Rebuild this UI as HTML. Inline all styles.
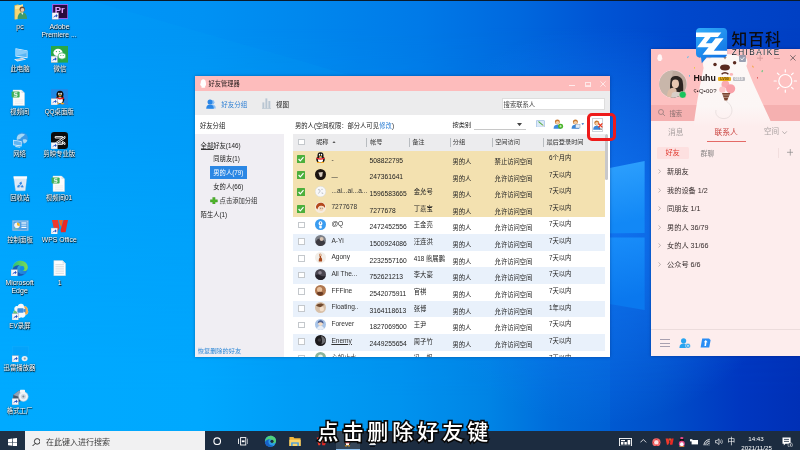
<!DOCTYPE html>
<html lang="zh-CN"><head><meta charset="utf-8"><title>desktop</title><style>
html,body{margin:0;padding:0}
body{width:800px;height:450px;overflow:hidden;position:relative;font-family:"Liberation Sans","Noto Sans CJK SC",sans-serif;background:#0b6fd0}
#wrap{position:absolute;left:-8px;top:-8px;width:816px;height:466px;overflow:hidden;filter:blur(0.35px);background:#0070e0}
#wrap>#in{position:absolute;left:8px;top:8px;width:800px;height:450px}
.a{position:absolute;display:block}
.t{position:absolute;white-space:nowrap;line-height:1.16}
.sh{text-shadow:0.5px 0.6px 0.7px rgba(0,0,0,.95),0 0 1.4px rgba(0,0,0,.75)}
.sub{-webkit-text-stroke:3.1px #080808;paint-order:stroke fill;stroke-linejoin:round;letter-spacing:0.19em;font-weight:500}
</style></head>
<body>
<div id="wrap"><div id="in">
<svg class="a" style="left:0;top:0;width:800px;height:450px" viewBox="0 0 800 450" preserveAspectRatio="none">
<defs>
<linearGradient id="bgT" x1="0" y1="0" x2="1" y2="0">
<stop offset="0" stop-color="#0099fa"/><stop offset="0.25" stop-color="#0092f4"/><stop offset="0.375" stop-color="#0088ee"/><stop offset="0.525" stop-color="#007ae8"/><stop offset="0.65" stop-color="#0068de"/><stop offset="0.75" stop-color="#0054d4"/><stop offset="0.84" stop-color="#0048cc"/><stop offset="1" stop-color="#0040c4"/>
</linearGradient>
<linearGradient id="bgB" x1="0" y1="0" x2="1" y2="0">
<stop offset="0" stop-color="#00a8ff"/><stop offset="0.25" stop-color="#00a6fe"/><stop offset="0.375" stop-color="#009af6"/><stop offset="0.5" stop-color="#0090ee"/><stop offset="0.61" stop-color="#0080e4"/><stop offset="0.7" stop-color="#0064d7"/><stop offset="0.76" stop-color="#005ad2"/><stop offset="0.825" stop-color="#0050ca"/><stop offset="0.925" stop-color="#0037c0"/><stop offset="1" stop-color="#0030b6"/>
</linearGradient>
<linearGradient id="vm" x1="0" y1="0" x2="0" y2="1"><stop offset="0" stop-color="#fff" stop-opacity="0"/><stop offset="0.06" stop-color="#fff" stop-opacity="0"/><stop offset="0.47" stop-color="#fff" stop-opacity="0.62"/><stop offset="0.88" stop-color="#fff" stop-opacity="1"/></linearGradient>
<mask id="vmask"><rect width="800" height="450" fill="url(#vm)"/></mask>
<linearGradient id="pane" x1="0" y1="0" x2="0.3" y2="1">
<stop offset="0" stop-color="#34a6ff"/><stop offset="1" stop-color="#1288f6"/>
</linearGradient>
<linearGradient id="pane2" x1="0" y1="0" x2="0.3" y2="1">
<stop offset="0" stop-color="#1c92fc"/><stop offset="1" stop-color="#0a78ee"/>
</linearGradient>
<radialGradient id="glow" cx="600" cy="225" r="200" gradientUnits="userSpaceOnUse"><stop offset="0" stop-color="#1880ff" stop-opacity=".7"/><stop offset="1" stop-color="#1c8cff" stop-opacity="0"/></radialGradient>
</defs>
<rect width="800" height="450" fill="url(#bgT)"/>
<rect width="800" height="450" fill="url(#bgB)" mask="url(#vmask)"/>
<polygon points="89,0 610,150 610,450 0,450 0,0" fill="#00c8ff" opacity="0.06"/>
<rect x="400" y="25" width="400" height="400" fill="url(#glow)"/>
<polygon points="540,182 644.6,161 644.6,233 540,234" fill="url(#pane)"/>
<polygon points="540,237.4 644.6,237.4 644.6,310 540,292" fill="url(#pane2)"/>
<rect width="800" height="1" fill="#0a1a2a"/>
</svg>
<svg class="a" style="left:12px;top:3px;width:18px;height:18px;" viewBox="0 0 18 18">
<path d="M2.5 2.2 L6.5 1.2 L6.5 15.5 L2.5 16.5Z" fill="#e9b84a"/>
<path d="M3.2 3 L11 1.6 L11 15.2 L3.2 16.4Z" fill="#f7d674"/>
<path d="M3.2 3 L11 1.6 L11 5 L3.2 6.2Z" fill="#fbe59a"/>
<circle cx="10.2" cy="6.2" r="2.6" fill="#6a4a32"/>
<circle cx="10.4" cy="6.9" r="1.9" fill="#f0c8a0"/>
<path d="M5.6 16 C5.6 11.5 7.6 9.6 10.3 9.6 C13 9.6 15 11.5 15 16Z" fill="#3f9a68"/>
<path d="M9.2 9.8 L10.3 12 L11.4 9.8Z" fill="#e8f0ea"/>
</svg>
<div class="t sh" style="top:23.04px;font-size:7px;color:#fff;left:-5.00px;width:50px;text-align:center;">pc</div>
<svg class="a" style="left:51.5px;top:4.2px;width:16.4px;height:15.6px;" viewBox="0 0 16.4 15.6">
<rect x="0.6" y="0.4" width="15.2" height="14.2" fill="#2a0b3e" stroke="#9a62f0" stroke-width="1.1"/>
<g transform="translate(0,8.8)"><rect width="6.5" height="6.5" fill="#f4f6fa" stroke="#8a98b0" stroke-width="0.4"/><path d="M1.5 5.2 C1.6 3.2 2.8 2.4 4 2.4 L4 1.2 L5.8 3 L4 4.6 L4 3.6 C3 3.6 2.2 4 1.5 5.2Z" fill="#2453c8"/></g></svg>
<div class="t" style="top:4.49px;font-size:9.5px;color:#e3a6ff;left:49.80px;width:20px;text-align:center;font-weight:bold;">Pr</div>
<div class="t sh" style="top:23.04px;font-size:7px;color:#fff;left:34.50px;width:50px;text-align:center;">Adobe</div>
<div class="t sh" style="top:31.16px;font-size:6.8px;color:#fff;left:34.00px;width:50px;text-align:center;">Premiere ...</div>
<svg class="a" style="left:12px;top:46px;width:18px;height:18px;" viewBox="0 0 18 18">
<path d="M3.5 2.2 L15.5 4.4 L15.5 12.2 L3.5 10.6Z" fill="#e8f4ff"/>
<path d="M4.3 3.2 L14.8 5.1 L14.8 11.3 L4.3 9.8Z" fill="#5ab6f4"/>
<path d="M4.3 3.2 L14.8 5.1 L14.8 7 L4.3 9.8Z" fill="#86ccfa"/>
<path d="M8.6 11.4 L10.6 11.7 L10.6 13 L8.6 12.7Z" fill="#c8d4e0"/>
<path d="M2 13.2 L10.5 12 L14.2 13.6 L5.4 15.4Z" fill="#eef3f8"/>
<path d="M3.4 13.4 L10.2 12.5 L12.4 13.5 L5.6 14.6Z" fill="#b8c4d2"/>
</svg>
<div class="t sh" style="top:65.29px;font-size:6.4px;color:#fff;left:-5.00px;width:50px;text-align:center;">此电脑</div>
<svg class="a" style="left:51px;top:46.4px;width:17px;height:16.6px;" viewBox="0 0 17 16.6">
<rect width="17" height="16.6" fill="#2aa745"/>
<ellipse cx="7" cy="6.6" rx="4.6" ry="3.8" fill="#fff"/>
<ellipse cx="11" cy="10" rx="3.9" ry="3.2" fill="#fff" stroke="#2aa745" stroke-width="0.7"/>
<circle cx="5.4" cy="5.6" r="0.6" fill="#2aa745"/><circle cx="8.4" cy="5.6" r="0.6" fill="#2aa745"/>
<circle cx="9.8" cy="9.4" r="0.5" fill="#2aa745"/><circle cx="12.2" cy="9.4" r="0.5" fill="#2aa745"/>
<g transform="translate(0,10.1)"><rect width="6.5" height="6.5" fill="#f4f6fa" stroke="#8a98b0" stroke-width="0.4"/><path d="M1.5 5.2 C1.6 3.2 2.8 2.4 4 2.4 L4 1.2 L5.8 3 L4 4.6 L4 3.6 C3 3.6 2.2 4 1.5 5.2Z" fill="#2453c8"/></g></svg>
<div class="t sh" style="top:65.29px;font-size:6.4px;color:#fff;left:35.00px;width:50px;text-align:center;">微信</div>
<svg class="a" style="left:10.2px;top:89px;width:17px;height:17px;" viewBox="0 0 17 17">
<path d="M3 1 L11.5 1 L14.5 4 L14.5 16.5 L3 16.5Z" fill="#fbfbfb" stroke="#d4d8dc" stroke-width="0.4"/>
<path d="M11.5 1 L11.5 4 L14.5 4Z" fill="#dfe4e8"/>
<rect x="1.6" y="2.4" width="8" height="6.2" rx="0.8" fill="#3fae56"/>
<path d="M7.4 3.8 L4.4 3.8 L4.4 5.4 L7 5.4 L7 7.2 L3.8 7.2" fill="none" stroke="#fff" stroke-width="0.9"/>
<path d="M5 11 L13 11 M5 12.8 L13 12.8 M5 14.6 L13 14.6" stroke="#e2e6ea" stroke-width="0.6"/>
</svg>
<div class="t sh" style="top:108.39px;font-size:6.4px;color:#fff;left:-5.40px;width:50px;text-align:center;">视频间</div>
<svg class="a" style="left:51px;top:89px;width:17px;height:16px;" viewBox="0 0 17 16">
<rect width="17" height="16" fill="#1f8ae6"/>
<ellipse cx="9" cy="5.6" rx="3.5" ry="3.8" fill="#111"/>
<ellipse cx="9" cy="10.6" rx="4.3" ry="4" fill="#111"/>
<ellipse cx="9" cy="11.2" rx="2.8" ry="3" fill="#fff"/>
<ellipse cx="7.9" cy="4.8" rx="0.8" ry="1.1" fill="#fff"/><ellipse cx="10.1" cy="4.8" rx="0.8" ry="1.1" fill="#fff"/>
<ellipse cx="9" cy="6.8" rx="1.7" ry="0.7" fill="#f7a81c"/>
<path d="M5.2 8 C7 9.4 11 9.4 12.8 8 L13 9.6 C11 10.8 7 10.8 5 9.6Z" fill="#e8262a"/>
<ellipse cx="6.6" cy="14.6" rx="1.9" ry="0.8" fill="#f7a81c"/><ellipse cx="11.4" cy="14.6" rx="1.9" ry="0.8" fill="#f7a81c"/>
<g transform="translate(0,9.5)"><rect width="6.5" height="6.5" fill="#f4f6fa" stroke="#8a98b0" stroke-width="0.4"/><path d="M1.5 5.2 C1.6 3.2 2.8 2.4 4 2.4 L4 1.2 L5.8 3 L4 4.6 L4 3.6 C3 3.6 2.2 4 1.5 5.2Z" fill="#2453c8"/></g></svg>
<div class="t sh" style="top:108.39px;font-size:6.4px;color:#fff;left:34.20px;width:50px;text-align:center;">QQ桌面版</div>
<svg class="a" style="left:12px;top:131.5px;width:18px;height:17px;" viewBox="0 0 18 17">
<circle cx="10.2" cy="6.2" r="5.6" fill="#3a9ae8"/>
<path d="M6 3.2 C8 1.6 11 1.2 13 2.4 C12 4 9.6 4.6 8.6 6.4 C7.8 7.6 6.2 6.8 5 8 C4.4 6.2 5 4.4 6 3.2Z" fill="#a4d8f6"/>
<path d="M11 7.6 C12.6 7 14.6 7.6 15.4 8.6 C14.8 10.2 13.6 11.2 12 11.6 C11.2 10.4 10.6 9 11 7.6Z" fill="#a4d8f6"/>
<path d="M1.2 7.8 L9.6 9.2 L9.6 14.4 L1.2 13.2Z" fill="#eaf4fd"/>
<path d="M1.9 8.6 L8.9 9.8 L8.9 13.6 L1.9 12.5Z" fill="#5fb4f2"/>
<path d="M3.4 14 L8.2 14.7 L8.2 15.7 L3.4 15Z" fill="#d8e2ec"/>
</svg>
<div class="t sh" style="top:150.49px;font-size:6.4px;color:#fff;left:-5.40px;width:50px;text-align:center;">网络</div>
<svg class="a" style="left:51px;top:131.5px;width:17px;height:17px;" viewBox="0 0 17 17">
<rect width="17" height="17" rx="3.2" fill="#0b0b0b"/>
<path d="M4.2 4.6 L11.6 4.6 L11.6 6 L14 4.4 L14 6.2 L6.6 11 L11.6 11 L11.6 12.4 L4.2 12.4 L4.2 11 L4.2 11 L11.4 6 L4.2 6Z M11.6 11 L14 12.6 L14 10.8 L11.6 9.4Z" fill="none" stroke="#fff" stroke-width="0.9" stroke-linejoin="round"/>
<g transform="translate(0,10.5)"><rect width="6.5" height="6.5" fill="#f4f6fa" stroke="#8a98b0" stroke-width="0.4"/><path d="M1.5 5.2 C1.6 3.2 2.8 2.4 4 2.4 L4 1.2 L5.8 3 L4 4.6 L4 3.6 C3 3.6 2.2 4 1.5 5.2Z" fill="#2453c8"/></g></svg>
<div class="t sh" style="top:150.49px;font-size:6.4px;color:#fff;left:34.30px;width:50px;text-align:center;">剪映专业版</div>
<svg class="a" style="left:12px;top:174.5px;width:17px;height:17px;" viewBox="0 0 17 17">
<path d="M1.6 1.6 L15 1.6 L13.2 15.8 L3.6 15.8Z" fill="#eef4fb" stroke="#9fc4e6" stroke-width="0.4"/>
<path d="M1.6 1.6 L15 1.6 L14.7 3.8 L1.9 3.8Z" fill="#fbfdff"/>
<path d="M2.8 3.8 L13.8 3.8 L12.6 15 L4.2 15Z" fill="#dce9f6"/>
<path d="M8.3 6.2 L10 8.8 L8.9 8.8 L8.9 9.8 L7.7 9.8 L7.7 8.8 L6.6 8.8Z" fill="#2f86e4" transform="rotate(20 8.3 9.5)"/>
<path d="M6.2 9.6 L5 12.2 L7.6 12.4 L7.2 11.6 L8.4 11 L7.8 10 L6.7 10.5Z" fill="#2f86e4"/>
<path d="M10.4 9.8 L11.8 12.2 L9.2 12.6 L9.4 11.8 L8.4 11.4 L9 10.4 L10 10.8Z" fill="#2f86e4"/>
</svg>
<div class="t sh" style="top:193.69px;font-size:6.4px;color:#fff;left:-5.20px;width:50px;text-align:center;">回收站</div>
<svg class="a" style="left:49.8px;top:174.5px;width:17px;height:17px;" viewBox="0 0 17 17">
<path d="M3 1 L11.5 1 L14.5 4 L14.5 16.5 L3 16.5Z" fill="#fbfbfb" stroke="#d4d8dc" stroke-width="0.4"/>
<path d="M11.5 1 L11.5 4 L14.5 4Z" fill="#dfe4e8"/>
<rect x="1.6" y="2.4" width="8" height="6.2" rx="0.8" fill="#3fae56"/>
<path d="M7.4 3.8 L4.4 3.8 L4.4 5.4 L7 5.4 L7 7.2 L3.8 7.2" fill="none" stroke="#fff" stroke-width="0.9"/>
<path d="M5 11 L13 11 M5 12.8 L13 12.8 M5 14.6 L13 14.6" stroke="#e2e6ea" stroke-width="0.6"/>
</svg>
<div class="t sh" style="top:193.69px;font-size:6.4px;color:#fff;left:34.00px;width:50px;text-align:center;">视频间01</div>
<svg class="a" style="left:11.5px;top:219.5px;width:17px;height:12px;" viewBox="0 0 17 12">
<rect x="0.5" y="0.6" width="15.8" height="10" fill="#dcecf8" stroke="#6aa2d8" stroke-width="0.5"/>
<rect x="1.2" y="1.3" width="14.4" height="8.6" fill="#4f9fe4"/>
<circle cx="5" cy="5.2" r="2.8" fill="#f4f4f0"/><path d="M5 5.2 L5 2.4 A2.8 2.8 0 0 1 7.6 6.2Z" fill="#f0b428"/>
<rect x="9.4" y="2.4" width="5" height="1.2" fill="#fff"/><rect x="9.4" y="4.6" width="5" height="1.2" fill="#cfe6fa"/><rect x="9.4" y="6.8" width="5" height="1.2" fill="#fff"/>
<rect x="2.2" y="8.6" width="3.4" height="0.8" fill="#9fe07a"/>
</svg>
<div class="t sh" style="top:236.09px;font-size:6.4px;color:#fff;left:-5.00px;width:50px;text-align:center;">控制面板</div>
<svg class="a" style="left:51px;top:218.5px;width:17.5px;height:15.5px;" viewBox="0 0 17.5 15.5">
<path d="M1 1 L7 1 L8.4 9 L6.2 13.2 L3.6 13.2Z" fill="#f0392b"/>
<path d="M7.6 1 L12 1 L10.4 8.6 L8.8 5.2Z" fill="#f7671f"/>
<path d="M12.6 1 L17 1 L14.6 13.2 L10 13.2 L9.6 11Z" fill="#ea2a24"/>
<g transform="translate(0,9)"><rect width="6.5" height="6.5" fill="#f4f6fa" stroke="#8a98b0" stroke-width="0.4"/><path d="M1.5 5.2 C1.6 3.2 2.8 2.4 4 2.4 L4 1.2 L5.8 3 L4 4.6 L4 3.6 C3 3.6 2.2 4 1.5 5.2Z" fill="#2453c8"/></g></svg>
<div class="t sh" style="top:235.86px;font-size:6.8px;color:#fff;left:34.30px;width:50px;text-align:center;">WPS Office</div>
<svg class="a" style="left:11px;top:259.5px;width:17.6px;height:16.6px;" viewBox="0 0 17.6 16.6">
<defs><linearGradient id="eg1" x1="0" y1="0" x2="1" y2="1"><stop offset="0" stop-color="#37c2e8"/><stop offset="1" stop-color="#1a6fd6"/></linearGradient>
<linearGradient id="eg2" x1="0" y1="0" x2="1" y2="0"><stop offset="0" stop-color="#2fbf7a"/><stop offset="1" stop-color="#7fdc52"/></linearGradient></defs>
<circle cx="9" cy="8.2" r="7.8" fill="url(#eg1)"/>
<path d="M2 6 C3.6 1.8 8 -0.4 12.4 1.2 C15.4 2.4 17 5 16.8 8 C16.6 10.4 14.6 11.4 12.6 11 C11 10.6 10.4 9.4 11 8.2 C11.4 7.2 10.6 5.6 8.6 5.4 C6 5.2 3.4 6.4 2 9.6Z" fill="url(#eg2)"/>
<path d="M1.4 9.4 C2.6 6.4 5.6 5 8.4 5.4 C6.6 6.2 5.8 8 6.4 10.2 C7.2 13 9.8 14.6 13.2 14 C11 16.2 7.4 16.6 4.6 15 C2.4 13.8 1.2 11.6 1.4 9.4Z" fill="#1759b8"/>
<ellipse cx="11.2" cy="8.4" rx="2.2" ry="2.4" fill="#0c8ee6"/>
<g transform="translate(0,9.6)"><rect width="6.5" height="6.5" fill="#f4f6fa" stroke="#8a98b0" stroke-width="0.4"/><path d="M1.5 5.2 C1.6 3.2 2.8 2.4 4 2.4 L4 1.2 L5.8 3 L4 4.6 L4 3.6 C3 3.6 2.2 4 1.5 5.2Z" fill="#2453c8"/></g></svg>
<div class="t sh" style="top:278.74px;font-size:7px;color:#fff;left:-5.40px;width:50px;text-align:center;">Microsoft</div>
<div class="t sh" style="top:286.94px;font-size:7px;color:#fff;left:-5.40px;width:50px;text-align:center;">Edge</div>
<svg class="a" style="left:53px;top:260px;width:13.4px;height:16.4px;" viewBox="0 0 13.4 16.4">
<path d="M0.8 0.6 L9.6 0.6 L12.6 3.6 L12.6 15.8 L0.8 15.8Z" fill="#fdfdfd" stroke="#c8ccd0" stroke-width="0.4"/>
<path d="M9.6 0.6 L9.6 3.6 L12.6 3.6Z" fill="#dde1e5"/>
<path d="M2.4 4.6 L11 4.6 M2.4 6.4 L11 6.4 M2.4 8.2 L11 8.2 M2.4 10 L11 10 M2.4 11.8 L11 11.8 M2.4 13.6 L11 13.6" stroke="#d0d4d8" stroke-width="0.7"/>
</svg>
<div class="t sh" style="top:278.54px;font-size:7px;color:#fff;left:34.60px;width:50px;text-align:center;">1</div>
<svg class="a" style="left:11.5px;top:302.5px;width:17px;height:17.5px;" viewBox="0 0 17 17.5">
<path d="M8.6 0.8 C10.6 0.4 12 1.8 12 3.4 C14 3 16 4.6 15.6 7 C17 8.6 16 11.6 13.6 11.8 C13.4 14 11 15.4 9 14.2 C7 16 3.8 15 3.6 12.4 C1.2 11.8 0.6 8.6 2.6 7.2 C1.6 4.8 3.6 2.6 5.8 3.2 C6 1.8 7.2 0.9 8.6 0.8Z" fill="#f4f8fb"/>
<path d="M12 3.4 C14 3 16 4.6 15.6 7 C17 8.6 16 11.6 13.6 11.8 L12.6 9 L13 6Z" fill="#f2a23a" opacity="0.9"/>
<path d="M3.6 12.4 C1.2 11.8 0.6 8.6 2.6 7.2 L5 9 L5.4 12Z" fill="#5bbf6a" opacity="0.9"/>
<rect x="5.4" y="5.2" width="6.2" height="4.6" rx="0.8" fill="#3a8ee0"/><path d="M11.6 6.6 L13.6 5.4 L13.6 9.6 L11.6 8.4Z" fill="#3a8ee0"/>
<g transform="translate(0,10.6)"><rect width="6.5" height="6.5" fill="#f4f6fa" stroke="#8a98b0" stroke-width="0.4"/><path d="M1.5 5.2 C1.6 3.2 2.8 2.4 4 2.4 L4 1.2 L5.8 3 L4 4.6 L4 3.6 C3 3.6 2.2 4 1.5 5.2Z" fill="#2453c8"/></g></svg>
<div class="t sh" style="top:321.69px;font-size:6.4px;color:#fff;left:-5.20px;width:50px;text-align:center;">EV录屏</div>
<svg class="a" style="left:11.5px;top:345.5px;width:17px;height:16.5px;" viewBox="0 0 17 16.5">
<rect x="0.8" y="0.6" width="15.4" height="9.2" fill="#0a9cf4" stroke="#38b0fa" stroke-width="0.4" opacity="0.45"/>
<ellipse cx="12.6" cy="12.6" rx="3" ry="2.6" fill="#e8edf2"/><circle cx="12.8" cy="12.6" r="1.1" fill="#8e99a6"/>
<g transform="translate(0,9.6)"><rect width="6.5" height="6.5" fill="#f4f6fa" stroke="#8a98b0" stroke-width="0.4"/><path d="M1.5 5.2 C1.6 3.2 2.8 2.4 4 2.4 L4 1.2 L5.8 3 L4 4.6 L4 3.6 C3 3.6 2.2 4 1.5 5.2Z" fill="#2453c8"/></g></svg>
<div class="t sh" style="top:364.29px;font-size:6.4px;color:#fff;left:-5.50px;width:50px;text-align:center;">迅雷播放器</div>
<svg class="a" style="left:11.5px;top:389px;width:17px;height:16px;" viewBox="0 0 17 16">
<path d="M1.2 6 L7 1.6 L11.8 3.2 L11.8 10 L5.4 14 L1.2 11Z" fill="#46566a"/>
<path d="M1.2 6 L7 1.6 L11.8 3.2 L6 7.4Z" fill="#8fa2b8"/>
<circle cx="11.4" cy="7.6" r="4.8" fill="#eef2f6" stroke="#b8c2cc" stroke-width="0.5"/>
<circle cx="11.4" cy="7.6" r="2.6" fill="#cfd8e2"/><circle cx="11.4" cy="7.6" r="1" fill="#7c8896"/>
<rect x="8" y="0.8" width="5" height="3" rx="0.6" fill="#f4f6f8"/>
<g transform="translate(0,9.4)"><rect width="6.5" height="6.5" fill="#f4f6fa" stroke="#8a98b0" stroke-width="0.4"/><path d="M1.5 5.2 C1.6 3.2 2.8 2.4 4 2.4 L4 1.2 L5.8 3 L4 4.6 L4 3.6 C3 3.6 2.2 4 1.5 5.2Z" fill="#2453c8"/></g></svg>
<div class="t sh" style="top:406.99px;font-size:6.4px;color:#fff;left:-5.40px;width:50px;text-align:center;">格式工厂</div>
<div class="a" style="left:195px;top:76px;width:415px;height:281px;background:#fff;box-shadow:0 0 3px rgba(0,10,60,.35);"></div>
<div class="a" style="left:195px;top:76px;width:415px;height:15px;background:#fdbcbc;"></div>
<svg class="a" style="left:199.6px;top:79.2px;width:6.6px;height:9px;" viewBox="0 0 6.6 9"><path d="M3.3 0.2 C5 0.2 5.8 1.6 5.8 3.2 C5.8 4 6.4 4.8 6.4 6 C6.4 6.6 6 6.6 5.7 6.2 C5.6 7 5.2 7.4 4.8 7.7 C5.4 7.9 5.6 8.6 4.6 8.7 L2 8.7 C1 8.6 1.2 7.9 1.8 7.7 C1.4 7.4 1 7 0.9 6.2 C0.6 6.6 0.2 6.6 0.2 6 C0.2 4.8 0.8 4 0.8 3.2 C0.8 1.6 1.6 0.2 3.3 0.2Z" fill="#fff"/></svg>
<div class="t" style="top:80.38px;font-size:6.25px;color:#2a2020;left:208.6px;">好友管理器</div>
<div class="a" style="left:569px;top:85.2px;width:6.4px;height:0.9px;background:#fff;opacity:.7"></div>
<div class="a" style="left:585px;top:81.6px;width:5.6px;height:5.4px;background:transparent;border:0.8px solid #fff;box-sizing:border-box;opacity:.65"></div>
<div class="a" style="left:586px;top:84.6px;width:3.6px;height:0.7px;background:#fff;opacity:.55"></div>
<svg class="a" style="left:600px;top:81.4px;width:6px;height:6px;" viewBox="0 0 6 6"><path d="M0.4 0.4 L5.6 5.6 M5.6 0.4 L0.4 5.6" stroke="#fff" stroke-width="0.9" opacity=".7"/></svg>
<div class="a" style="left:195px;top:91px;width:415px;height:24px;background:#ececed;"></div>
<svg class="a" style="left:205.6px;top:98.6px;width:10px;height:10px;" viewBox="0 0 10 10">
<circle cx="6.2" cy="3.2" r="2.3" fill="#8ec0f4"/><path d="M2.6 9.6 C2.6 6.6 4.2 5.6 6.2 5.6 C8.2 5.6 9.8 6.6 9.8 9.6Z" fill="#8ec0f4"/>
<circle cx="4" cy="3" r="2.5" fill="#2a86e6"/><path d="M0.2 9.8 C0.2 6.6 1.8 5.4 4 5.4 C6.2 5.4 7.8 6.6 7.8 9.8Z" fill="#2a86e6"/></svg>
<div class="t" style="top:100.63px;font-size:6.5px;color:#2d7fd4;left:221.2px;">好友分组</div>
<svg class="a" style="left:261.8px;top:98.2px;width:9.4px;height:10.8px;" viewBox="0 0 9.4 10.8"><rect x="0.4" y="4.4" width="1.9" height="6" fill="#b9c6d2"/><rect x="3.4" y="0.4" width="1.9" height="10" fill="#b9c6d2"/><rect x="6.4" y="3" width="1.9" height="7.4" fill="#b9c6d2"/><rect x="0" y="10.1" width="9.4" height="0.7" fill="#b9c6d2"/></svg>
<div class="t" style="top:100.63px;font-size:6.5px;color:#222;left:276px;">视图</div>
<div class="a" style="left:501.6px;top:97.8px;width:103px;height:12.6px;background:#fff;border:0.6px solid #dedede;box-sizing:border-box;"></div>
<div class="t" style="top:100.95px;font-size:6.3px;color:#444;left:503.6px;">搜索联系人</div>
<div class="t" style="top:122.05px;font-size:6.3px;color:#222;left:200px;">好友分组</div>
<div class="a" style="left:195px;top:133.5px;width:88.5px;height:223.5px;background:#f0eef3;"></div>
<div class="t" style="top:141.75px;font-size:6.3px;color:#222;left:200.6px;">全部好友(146)</div>
<div class="a" style="left:201px;top:148.9px;width:12.6px;height:0.5px;background:#333;"></div>
<div class="t" style="top:155.25px;font-size:6.3px;color:#222;left:213.3px;">同朋友(1)</div>
<div class="a" style="left:210px;top:165.6px;width:37px;height:13.6px;background:#2b87e4;"></div>
<div class="t" style="top:169.25px;font-size:6.3px;color:#fff;left:213.3px;">男的人(79)</div>
<div class="t" style="top:182.95px;font-size:6.3px;color:#222;left:213.3px;">女的人(66)</div>
<svg class="a" style="left:210.2px;top:196.6px;width:7.8px;height:7.8px;" viewBox="0 0 8 8"><path d="M2.8 0.4 L5.2 0.4 L5.2 2.8 L7.6 2.8 L7.6 5.2 L5.2 5.2 L5.2 7.6 L2.8 7.6 L2.8 5.2 L0.4 5.2 L0.4 2.8 L2.8 2.8Z" fill="#4fb52a" stroke="#2f8a14" stroke-width="0.4"/></svg>
<div class="t" style="top:197.35px;font-size:6.3px;color:#333;left:219.6px;">点击添加分组</div>
<div class="t" style="top:210.75px;font-size:6.3px;color:#222;left:200.6px;">陌生人(1)</div>
<div class="t" style="top:347.40px;font-size:6.2px;color:#2a86d6;left:197.8px;">恢复删除的好友</div>
<div class="t" style="top:121.55px;font-size:6.3px;color:#222;left:295px;">男的人(空间权限：部分人可见</div>
<div class="t" style="top:121.55px;font-size:6.3px;color:#2d7fd4;left:379.2px;">修改</div>
<div class="t" style="top:121.55px;font-size:6.3px;color:#222;left:391.9px;">)</div>
<div class="t" style="top:121.40px;font-size:6.2px;color:#222;left:452.6px;">按类别</div>
<div class="a" style="left:474px;top:118.6px;width:52px;height:11.6px;background:#fff;border-bottom:0.6px solid #c8c8c8;box-sizing:border-box;"></div>
<svg class="a" style="left:516.6px;top:122.6px;width:5px;height:3.2px;" viewBox="0 0 5 3.2"><path d="M0 0 L5 0 L2.5 3.2Z" fill="#444"/></svg>
<svg class="a" style="left:536.4px;top:119.7px;width:8.8px;height:7.8px;" viewBox="0 0 10.2 8.8"><rect x="0.4" y="0.4" width="9.4" height="8" rx="0.8" fill="#dbe9f8" stroke="#7aa6d8" stroke-width="0.6"/><path d="M2.4 2 L7.6 6.4 L8.4 5.6 L3.4 1.4Z" fill="#4aa832"/><path d="M7.6 6.4 L8.8 7.2 L8.4 5.6Z" fill="#e8b040"/></svg>
<svg class="a" style="left:553.4px;top:118.6px;width:10.4px;height:10px;" viewBox="0 0 10.4 10"><circle cx="4.4" cy="3" r="2.5" fill="#c87830"/><circle cx="4.5" cy="3.6" r="1.7" fill="#f4cfa6"/><path d="M0.6 9.8 C0.6 6.8 2.2 5.8 4.4 5.8 C6.6 5.8 8.2 6.8 8.2 9.8Z" fill="#3a8ae0"/><circle cx="7.6" cy="7.2" r="2.5" fill="#48b428"/><path d="M6.4 7.2 L8.8 7.2 M7.6 6 L7.6 8.4" stroke="#dff5d0" stroke-width="0.7"/></svg>
<svg class="a" style="left:571.4px;top:118.6px;width:13.4px;height:10px;" viewBox="0 0 13.4 10"><circle cx="4.4" cy="3" r="2.5" fill="#c87830"/><circle cx="4.5" cy="3.6" r="1.7" fill="#f4cfa6"/><path d="M0.6 9.8 C0.6 6.8 2.2 5.8 4.4 5.8 C6.6 5.8 8.2 6.8 8.2 9.8Z" fill="#3a86d8"/><rect x="4.6" y="5.6" width="4.4" height="3.4" fill="#e4eef8" stroke="#6a8ab0" stroke-width="0.4"/><path d="M10.4 4.2 L13.2 4.2 L11.8 5.9Z" fill="#2a6ac0"/></svg>
<div class="a" style="left:592px;top:118.4px;width:11.4px;height:13.2px;background:#fff;border:0.6px solid #cfd4da;box-sizing:border-box;"></div>
<svg class="a" style="left:593px;top:119.8px;width:10px;height:10.4px;" viewBox="0 0 10 10.4"><circle cx="3.8" cy="3" r="2.5" fill="#c87830"/><circle cx="3.9" cy="3.6" r="1.7" fill="#f4cfa6"/><path d="M0.2 9.8 C0.2 6.8 1.8 5.8 3.8 5.8 C5.8 5.8 7.4 6.8 7.4 9.8Z" fill="#3a86d8"/><path d="M5.4 3.4 L9.4 7.4 M9.4 3.4 L5.4 7.4" stroke="#e8341c" stroke-width="1.3"/><path d="M7 8 L7 10.2 L7.7 9.6 L8.3 10.4 L8.7 10.1 L8.2 9.3 L9 9.2Z" fill="#fff" stroke="#333" stroke-width="0.3"/></svg>
<div class="a" style="left:293px;top:134px;width:312px;height:16.8px;background:#ececee;"></div>
<div class="a" style="left:298px;top:138.8px;width:6.8px;height:6.4px;background:#fff;border:0.5px solid #c4c8cc;box-sizing:border-box;"></div>
<div class="t" style="top:138.40px;font-size:6.2px;color:#333;left:316.2px;">昵称</div>
<div class="t" style="top:138.40px;font-size:6.2px;color:#333;left:370.2px;">帐号</div>
<div class="t" style="top:138.40px;font-size:6.2px;color:#333;left:412.2px;">备注</div>
<div class="t" style="top:138.40px;font-size:6.2px;color:#333;left:452.8px;">分组</div>
<div class="t" style="top:138.40px;font-size:6.2px;color:#333;left:495.2px;">空间访问</div>
<div class="t" style="top:138.40px;font-size:6.2px;color:#333;left:546.4px;">最后登录时间</div>
<svg class="a" style="left:331.6px;top:140.6px;width:4px;height:2.6px;" viewBox="0 0 4 2.6"><path d="M0 2.6 L4 2.6 L2 0Z" fill="#555"/></svg>
<div class="a" style="left:366px;top:138px;width:0.6px;height:8.6px;background:#b8bcc0;"></div>
<div class="a" style="left:408.8px;top:138px;width:0.6px;height:8.6px;background:#b8bcc0;"></div>
<div class="a" style="left:449.6px;top:138px;width:0.6px;height:8.6px;background:#b8bcc0;"></div>
<div class="a" style="left:492.4px;top:138px;width:0.6px;height:8.6px;background:#b8bcc0;"></div>
<div class="a" style="left:543.2px;top:138px;width:0.6px;height:8.6px;background:#b8bcc0;"></div>
<div class="a" style="left:293px;top:150.7px;width:312px;height:206.3px;overflow:hidden">
<div class="a" style="left:0;top:0.00px;width:312px;height:16.76px;background:#f3e1b0">
<svg class="a" style="left:4px;top:3.9px;width:8px;height:8px" viewBox="0 0 8 8"><rect width="8" height="8" rx="0.6" fill="#4caf3c"/><path d="M1.6 4 L3.3 5.8 L6.5 2.2" stroke="#fff" stroke-width="1.2" fill="none"/></svg>
<svg class="a" style="left:22.2px;top:1.5px;width:11px;height:11px" viewBox="0 0 11 11"><ellipse cx="5.5" cy="3.4" rx="3" ry="3.2" fill="#111"/><ellipse cx="5.5" cy="7.4" rx="4.2" ry="3.4" fill="#111"/><ellipse cx="5.5" cy="7.8" rx="2.6" ry="2.6" fill="#fff"/><ellipse cx="4.5" cy="2.8" rx="0.7" ry="1" fill="#fff"/><ellipse cx="6.5" cy="2.8" rx="0.7" ry="1" fill="#fff"/><path d="M1.8 5.2 C3.6 6.6 7.4 6.6 9.2 5.2 L9.6 6.8 C7.4 8 3.6 8 1.4 6.8Z" fill="#e8262a"/><ellipse cx="5.5" cy="4.6" rx="1.5" ry="0.6" fill="#f7a81c"/><ellipse cx="3.6" cy="10.4" rx="1.7" ry="0.6" fill="#f7a81c"/><ellipse cx="7.4" cy="10.4" rx="1.7" ry="0.6" fill="#f7a81c"/></svg>
<div class="t" style="left:38.4px;top:5.10px;font-size:6.6px;color:#333;">-</div>
<div class="t" style="left:76.6px;top:5.94px;font-size:6.7px;color:#222;">508822795</div>
<div class="t" style="left:120.8px;top:3.88px;font-size:6.3px;color:#222;"></div>
<div class="t" style="left:159.4px;top:7.18px;font-size:6.3px;color:#222;">男的人</div>
<div class="t" style="left:201.6px;top:7.18px;font-size:6.3px;color:#222;">禁止访问空间</div>
<div class="t" style="left:256px;top:3.18px;font-size:6.3px;color:#222;">6个月内</div>
</div>
<div class="a" style="left:0;top:16.66px;width:312px;height:16.76px;background:#f3e1b0">
<svg class="a" style="left:4px;top:3.9px;width:8px;height:8px" viewBox="0 0 8 8"><rect width="8" height="8" rx="0.6" fill="#4caf3c"/><path d="M1.6 4 L3.3 5.8 L6.5 2.2" stroke="#fff" stroke-width="1.2" fill="none"/></svg>
<svg class="a" style="left:22.2px;top:1.5px;width:11px;height:11px" viewBox="0 0 11 11"><circle cx="5.5" cy="5.5" r="5.5" fill="#1c1410"/><path d="M3.4 3.6 L7.8 3 L7.2 7.4 L5 8Z" fill="#d8ccc0"/></svg>
<div class="t" style="left:38.4px;top:5.28px;font-size:6.3px;color:#333;">—</div>
<div class="t" style="left:76.6px;top:5.94px;font-size:6.7px;color:#222;">247361641</div>
<div class="t" style="left:120.8px;top:3.88px;font-size:6.3px;color:#222;"></div>
<div class="t" style="left:159.4px;top:7.18px;font-size:6.3px;color:#222;">男的人</div>
<div class="t" style="left:201.6px;top:7.18px;font-size:6.3px;color:#222;">允许访问空间</div>
<div class="t" style="left:256px;top:3.18px;font-size:6.3px;color:#222;">7天以内</div>
</div>
<div class="a" style="left:0;top:33.32px;width:312px;height:16.76px;background:#f3e1b0">
<svg class="a" style="left:4px;top:3.9px;width:8px;height:8px" viewBox="0 0 8 8"><rect width="8" height="8" rx="0.6" fill="#4caf3c"/><path d="M1.6 4 L3.3 5.8 L6.5 2.2" stroke="#fff" stroke-width="1.2" fill="none"/></svg>
<svg class="a" style="left:22.2px;top:1.5px;width:11px;height:11px" viewBox="0 0 11 11"><circle cx="5.5" cy="5.5" r="5.3" fill="#f8f8f8" stroke="#d0d4d8" stroke-width="0.4"/><path d="M3 4 C4 3 5 3.6 5 5 C5 6 4 6.4 3.4 7.6 M6.4 3.4 L7.6 3.4 M6.6 7 C7.2 6.4 8 7 7.6 8" stroke="#9098a4" stroke-width="0.6" fill="none"/></svg>
<div class="t" style="left:38.4px;top:2.80px;font-size:6.6px;color:#333;">...ai...ai...a...</div>
<div class="t" style="left:76.6px;top:5.94px;font-size:6.7px;color:#222;">1596583665</div>
<div class="t" style="left:120.8px;top:3.88px;font-size:6.3px;color:#222;">金允号</div>
<div class="t" style="left:159.4px;top:7.18px;font-size:6.3px;color:#222;">男的人</div>
<div class="t" style="left:201.6px;top:7.18px;font-size:6.3px;color:#222;">允许访问空间</div>
<div class="t" style="left:256px;top:3.18px;font-size:6.3px;color:#222;">7天以内</div>
</div>
<div class="a" style="left:0;top:49.98px;width:312px;height:16.76px;background:#f3e1b0">
<svg class="a" style="left:4px;top:3.9px;width:8px;height:8px" viewBox="0 0 8 8"><rect width="8" height="8" rx="0.6" fill="#4caf3c"/><path d="M1.6 4 L3.3 5.8 L6.5 2.2" stroke="#fff" stroke-width="1.2" fill="none"/></svg>
<svg class="a" style="left:22.2px;top:1.5px;width:11px;height:11px" viewBox="0 0 11 11"><circle cx="5.5" cy="5.5" r="5.5" fill="#f6ece0"/><path d="M1 4.6 C1.6 1.8 4 0.4 6.4 0.8 C9 1.2 10.6 3.4 10 6 C9 4.4 7.6 3.6 6 3.8 C4 4 2.6 5.4 2.6 7.6 C1.4 6.8 0.8 5.8 1 4.6Z" fill="#b4481c"/><circle cx="6.2" cy="6.6" r="2.4" fill="#f4d4b4"/><circle cx="5.4" cy="6.2" r="0.4" fill="#222"/><circle cx="7.2" cy="6.2" r="0.4" fill="#222"/></svg>
<div class="t" style="left:38.4px;top:2.80px;font-size:6.6px;color:#333;">7277678</div>
<div class="t" style="left:76.6px;top:5.94px;font-size:6.7px;color:#222;">7277678</div>
<div class="t" style="left:120.8px;top:3.88px;font-size:6.3px;color:#222;">丁嘉宝</div>
<div class="t" style="left:159.4px;top:7.18px;font-size:6.3px;color:#222;">男的人</div>
<div class="t" style="left:201.6px;top:7.18px;font-size:6.3px;color:#222;">允许访问空间</div>
<div class="t" style="left:256px;top:3.18px;font-size:6.3px;color:#222;">7天以内</div>
</div>
<div class="a" style="left:0;top:66.64px;width:312px;height:16.76px;background:#fff">
<div class="a" style="left:4.8px;top:4.5px;width:6.8px;height:6.6px;background:#fff;border:0.5px solid #c4c8cc;box-sizing:border-box"></div>
<svg class="a" style="left:22.2px;top:1.5px;width:11px;height:11px" viewBox="0 0 11 11"><circle cx="5.5" cy="5.5" r="5.5" fill="#3a9cf0"/><ellipse cx="5.5" cy="4.4" rx="1.9" ry="2.2" fill="#fff"/><ellipse cx="5.5" cy="8" rx="1.4" ry="1.6" fill="#fff"/><circle cx="5.5" cy="4" r="0.7" fill="#2a60b0"/></svg>
<div class="t" style="left:38.4px;top:2.80px;font-size:6.6px;color:#333;">@Q</div>
<div class="t" style="left:76.6px;top:5.94px;font-size:6.7px;color:#222;">2472452556</div>
<div class="t" style="left:120.8px;top:3.88px;font-size:6.3px;color:#222;">王金亮</div>
<div class="t" style="left:159.4px;top:7.18px;font-size:6.3px;color:#222;">男的人</div>
<div class="t" style="left:201.6px;top:7.18px;font-size:6.3px;color:#222;">允许访问空间</div>
<div class="t" style="left:256px;top:3.18px;font-size:6.3px;color:#222;">7天以内</div>
</div>
<div class="a" style="left:0;top:83.30px;width:312px;height:16.76px;background:#e9f1fb">
<div class="a" style="left:4.8px;top:4.5px;width:6.8px;height:6.6px;background:#fff;border:0.5px solid #c4c8cc;box-sizing:border-box"></div>
<svg class="a" style="left:22.2px;top:1.5px;width:11px;height:11px" viewBox="0 0 11 11"><circle cx="5.5" cy="5.5" r="5.5" fill="#7c8088"/><path d="M0.6 7 C2 4 4 3 6 3.6 C8 4.2 9.4 6 10.4 8 C9 10.4 6.6 11.4 4 10.8 C2.2 10.2 1 8.8 0.6 7Z" fill="#3c3a40"/><circle cx="6.6" cy="4" r="2" fill="#d8c4b4"/></svg>
<div class="t" style="left:38.4px;top:2.80px;font-size:6.6px;color:#333;">A-Yi</div>
<div class="t" style="left:76.6px;top:5.94px;font-size:6.7px;color:#222;">1500924086</div>
<div class="t" style="left:120.8px;top:3.88px;font-size:6.3px;color:#222;">汪连洪</div>
<div class="t" style="left:159.4px;top:7.18px;font-size:6.3px;color:#222;">男的人</div>
<div class="t" style="left:201.6px;top:7.18px;font-size:6.3px;color:#222;">允许访问空间</div>
<div class="t" style="left:256px;top:3.18px;font-size:6.3px;color:#222;">7天以内</div>
</div>
<div class="a" style="left:0;top:99.96px;width:312px;height:16.76px;background:#fff">
<div class="a" style="left:4.8px;top:4.5px;width:6.8px;height:6.6px;background:#fff;border:0.5px solid #c4c8cc;box-sizing:border-box"></div>
<svg class="a" style="left:22.2px;top:1.5px;width:11px;height:11px" viewBox="0 0 11 11"><circle cx="5.5" cy="5.5" r="5.5" fill="#f2eee8"/><path d="M4.4 2 C5.4 1.4 6.4 2 6.4 3 C6.4 4 5.8 4.4 6 5.2 C7 5.8 7.4 7.4 7 9.6 L3.8 9.6 C3.6 7.6 4 6 5 5.2 C4.4 4.4 3.8 2.8 4.4 2Z" fill="#a8481c"/><circle cx="5.3" cy="3" r="1" fill="#e8c8a8"/></svg>
<div class="t" style="left:38.4px;top:2.80px;font-size:6.6px;color:#333;">Agony</div>
<div class="t" style="left:76.6px;top:5.94px;font-size:6.7px;color:#222;">2232557160</div>
<div class="t" style="left:120.8px;top:3.88px;font-size:6.3px;color:#222;">418 熊展鹏</div>
<div class="t" style="left:159.4px;top:7.18px;font-size:6.3px;color:#222;">男的人</div>
<div class="t" style="left:201.6px;top:7.18px;font-size:6.3px;color:#222;">允许访问空间</div>
<div class="t" style="left:256px;top:3.18px;font-size:6.3px;color:#222;">7天以内</div>
</div>
<div class="a" style="left:0;top:116.62px;width:312px;height:16.76px;background:#e9f1fb">
<div class="a" style="left:4.8px;top:4.5px;width:6.8px;height:6.6px;background:#fff;border:0.5px solid #c4c8cc;box-sizing:border-box"></div>
<svg class="a" style="left:22.2px;top:1.5px;width:11px;height:11px" viewBox="0 0 11 11"><circle cx="5.5" cy="5.5" r="5.5" fill="#4a4650"/><path d="M0.4 6.6 C2 5 4 5.4 5.4 6.6 C7 7.8 9 7.4 10.6 6.4 C10.4 9 8.2 11 5.5 11 C2.8 11 0.6 9 0.4 6.6Z" fill="#24222a"/><circle cx="5" cy="3.8" r="1.8" fill="#8c8490"/></svg>
<div class="t" style="left:38.4px;top:2.80px;font-size:6.6px;color:#333;">All The...</div>
<div class="t" style="left:76.6px;top:5.94px;font-size:6.7px;color:#222;">752621213</div>
<div class="t" style="left:120.8px;top:3.88px;font-size:6.3px;color:#222;">李大豪</div>
<div class="t" style="left:159.4px;top:7.18px;font-size:6.3px;color:#222;">男的人</div>
<div class="t" style="left:201.6px;top:7.18px;font-size:6.3px;color:#222;">允许访问空间</div>
<div class="t" style="left:256px;top:3.18px;font-size:6.3px;color:#222;">7天以内</div>
</div>
<div class="a" style="left:0;top:133.28px;width:312px;height:16.76px;background:#fff">
<div class="a" style="left:4.8px;top:4.5px;width:6.8px;height:6.6px;background:#fff;border:0.5px solid #c4c8cc;box-sizing:border-box"></div>
<svg class="a" style="left:22.2px;top:1.5px;width:11px;height:11px" viewBox="0 0 11 11"><circle cx="5.5" cy="5.5" r="5.5" fill="#b07850"/><circle cx="4.6" cy="4.6" r="2.6" fill="#e8c09c"/><path d="M1.8 8 C3 6.6 6 6.4 8 7.6 C8.8 8.8 7.6 10.4 5.5 10.8 C3.6 10.6 2.2 9.6 1.8 8Z" fill="#6a3c24"/></svg>
<div class="t" style="left:38.4px;top:2.80px;font-size:6.6px;color:#333;">FFFine</div>
<div class="t" style="left:76.6px;top:5.94px;font-size:6.7px;color:#222;">2542075911</div>
<div class="t" style="left:120.8px;top:3.88px;font-size:6.3px;color:#222;">官祺</div>
<div class="t" style="left:159.4px;top:7.18px;font-size:6.3px;color:#222;">男的人</div>
<div class="t" style="left:201.6px;top:7.18px;font-size:6.3px;color:#222;">允许访问空间</div>
<div class="t" style="left:256px;top:3.18px;font-size:6.3px;color:#222;">7天以内</div>
</div>
<div class="a" style="left:0;top:149.94px;width:312px;height:16.76px;background:#e9f1fb">
<div class="a" style="left:4.8px;top:4.5px;width:6.8px;height:6.6px;background:#fff;border:0.5px solid #c4c8cc;box-sizing:border-box"></div>
<svg class="a" style="left:22.2px;top:1.5px;width:11px;height:11px" viewBox="0 0 11 11"><circle cx="5.5" cy="5.5" r="5.5" fill="#d8c0a8"/><path d="M1 3.6 C3 1 7 0.6 9.6 3 C8 3.2 6.6 4 6 5.4 C4.4 5 2.6 4.6 1 3.6Z" fill="#70482c"/><circle cx="6.8" cy="7" r="2.2" fill="#f4e0cc"/></svg>
<div class="t" style="left:38.4px;top:2.80px;font-size:6.6px;color:#333;">Floating..</div>
<div class="t" style="left:76.6px;top:5.94px;font-size:6.7px;color:#222;">3164118613</div>
<div class="t" style="left:120.8px;top:3.88px;font-size:6.3px;color:#222;">张博</div>
<div class="t" style="left:159.4px;top:7.18px;font-size:6.3px;color:#222;">男的人</div>
<div class="t" style="left:201.6px;top:7.18px;font-size:6.3px;color:#222;">允许访问空间</div>
<div class="t" style="left:256px;top:3.18px;font-size:6.3px;color:#222;">1年以内</div>
</div>
<div class="a" style="left:0;top:166.60px;width:312px;height:16.76px;background:#fff">
<div class="a" style="left:4.8px;top:4.5px;width:6.8px;height:6.6px;background:#fff;border:0.5px solid #c4c8cc;box-sizing:border-box"></div>
<svg class="a" style="left:22.2px;top:1.5px;width:11px;height:11px" viewBox="0 0 11 11"><circle cx="5.5" cy="5.5" r="5.5" fill="#a8c4e8"/><circle cx="5.5" cy="4.6" r="2.4" fill="#f4dcc4"/><path d="M2.6 4.4 C2.8 2 4.4 1 6 1.2 C7.8 1.4 8.8 3 8.4 4.8 C7.4 3.6 5.8 3 4.4 3.4 C3.6 3.6 3 4 2.6 4.4Z" fill="#4a5c8c"/><path d="M2 9.6 C2.6 7.6 4 7 5.5 7 C7 7 8.4 7.6 9 9.6 C8 10.6 6.8 11 5.5 11 C4.2 11 3 10.6 2 9.6Z" fill="#e8eef6"/></svg>
<div class="t" style="left:38.4px;top:2.80px;font-size:6.6px;color:#333;">Forever</div>
<div class="t" style="left:76.6px;top:5.94px;font-size:6.7px;color:#222;">1827069500</div>
<div class="t" style="left:120.8px;top:3.88px;font-size:6.3px;color:#222;">王尹</div>
<div class="t" style="left:159.4px;top:7.18px;font-size:6.3px;color:#222;">男的人</div>
<div class="t" style="left:201.6px;top:7.18px;font-size:6.3px;color:#222;">允许访问空间</div>
<div class="t" style="left:256px;top:3.18px;font-size:6.3px;color:#222;">7天以内</div>
</div>
<div class="a" style="left:0;top:183.26px;width:312px;height:16.76px;background:#e9f1fb">
<div class="a" style="left:4.8px;top:4.5px;width:6.8px;height:6.6px;background:#fff;border:0.5px solid #c4c8cc;box-sizing:border-box"></div>
<svg class="a" style="left:22.2px;top:1.5px;width:11px;height:11px" viewBox="0 0 11 11"><circle cx="5.5" cy="5.5" r="5.5" fill="#1c1a1c"/><path d="M6 1 C8.6 1.4 10.4 3.4 10.6 6 C9.6 8 8 9 6.4 9.2 C7.4 7 7.2 3.8 6 1Z" fill="#6c6c70"/><circle cx="4.4" cy="5" r="1.8" fill="#3c383c"/></svg>
<div class="t" style="left:38.4px;top:2.80px;font-size:6.6px;color:#333;text-decoration:underline;">Enemy</div>
<div class="t" style="left:76.6px;top:5.94px;font-size:6.7px;color:#222;">2449255654</div>
<div class="t" style="left:120.8px;top:3.88px;font-size:6.3px;color:#222;">周子竹</div>
<div class="t" style="left:159.4px;top:7.18px;font-size:6.3px;color:#222;">男的人</div>
<div class="t" style="left:201.6px;top:7.18px;font-size:6.3px;color:#222;">允许访问空间</div>
<div class="t" style="left:256px;top:3.18px;font-size:6.3px;color:#222;">7天以内</div>
</div>
<div class="a" style="left:0;top:199.92px;width:312px;height:16.76px;background:#fff">
<div class="a" style="left:4.8px;top:4.5px;width:6.8px;height:6.6px;background:#fff;border:0.5px solid #c4c8cc;box-sizing:border-box"></div>
<svg class="a" style="left:22.2px;top:1.5px;width:11px;height:11px" viewBox="0 0 11 11"><circle cx="5.5" cy="5.5" r="5.5" fill="#8cb49c"/><circle cx="5.5" cy="4.8" r="2.4" fill="#e8f0e8"/></svg>
<div class="t" style="left:38.4px;top:2.98px;font-size:6.3px;color:#333;">心如止水</div>
<div class="t" style="left:76.6px;top:5.94px;font-size:6.7px;color:#222;">1064470121</div>
<div class="t" style="left:120.8px;top:3.88px;font-size:6.3px;color:#222;">冯一帆</div>
<div class="t" style="left:159.4px;top:7.18px;font-size:6.3px;color:#222;">男的人</div>
<div class="t" style="left:201.6px;top:7.18px;font-size:6.3px;color:#222;">允许访问空间</div>
<div class="t" style="left:256px;top:3.18px;font-size:6.3px;color:#222;">7天以内</div>
</div>
</div>
<div class="a" style="left:604.6px;top:134px;width:5.4px;height:223px;background:#fff;"></div>
<div class="a" style="left:605px;top:134.4px;width:3.4px;height:45.6px;background:#c8c8ca;border-radius:1.7px;"></div>
<div class="a" style="left:586.5px;top:113.2px;width:29.9px;height:28.1px;background:transparent;border:3.1px solid #ee1a1a;border-radius:5px;box-sizing:border-box;"></div>
<div class="a" style="left:651px;top:49px;width:149px;height:306.6px;background:#fdeded;box-shadow:0 0 3px rgba(0,10,60,.35);overflow:hidden;"></div>
<div class="a" style="left:651px;top:49px;width:149px;height:80px;overflow:hidden">
<div class="a" style="left:0;top:0;width:149px;height:72px;background:#fdc1c1"></div>
<div class="a" style="left:0;top:56px;width:149px;height:16px;background:rgba(228,140,140,.3)"></div>
<svg class="a" style="left:0;top:0;width:149px;height:80px" viewBox="651 49 149 80">
<defs><linearGradient id="bearf" x1="0" y1="0" x2="0" y2="1"><stop offset="0" stop-color="#fcf8f7"/><stop offset="0.72" stop-color="#fcf6f5"/><stop offset="0.9" stop-color="#fdf0f0"/><stop offset="1" stop-color="#fdeded"/></linearGradient></defs>
<path d="M693.6 126 C695.6 110 699.6 86 703.6 68 C701.6 61 705 57 710 58.6 C715 53 736 53 741 57.6 C746 55.6 749 60 746.4 66 C752 82 764 106 771 122 C772 125 771 127 768 127 L696.6 127 C694.6 127 693.6 127 693.6 126Z" fill="url(#bearf)"/>
<circle cx="715" cy="64.4" r="1.75" fill="#5a2a20"/><circle cx="734.6" cy="62.8" r="1.75" fill="#5a2a20"/>
<ellipse cx="725" cy="67.6" rx="4.9" ry="3" fill="#5a2a20"/><ellipse cx="731.4" cy="74.4" rx="1.7" ry="1.3" fill="#fbb4b8"/>
<path d="M721.6 74.2 C723.4 72.2 726.6 72.2 728.4 74.2" stroke="#5a2a20" stroke-width="1.4" fill="none"/>
<path d="M723.4 57 L726.6 57 L725 59.6Z" fill="#6a4a40" opacity=".7"/>
<circle cx="725.4" cy="84.4" r="3.9" fill="#fbaab0"/><circle cx="730.6" cy="88.8" r="4.6" fill="#f9a0a8"/><circle cx="722.4" cy="89.6" r="3.2" fill="#fcc6c8"/>
<path d="M722 93 L730.4 93 L727.2 100.4 L724.6 100.4Z" fill="#7a4430"/>
<path d="M722.4 95 L730 95 M723.4 97.4 L729 97.4" stroke="#f4e4d8" stroke-width="0.5"/>
<path d="M726 101 C731 104 735 111 729 117 C723 121 714 117 716 110" stroke="#cfc4c4" stroke-width="0.4" fill="none"/>
<g fill="none" stroke="#fff" stroke-width="1.2" stroke-linecap="round"><circle cx="785.3" cy="81" r="6.5"/>
<path d="M785.3 69.8 L785.3 72 M785.3 90 L785.3 92.2 M774.1 81 L776.3 81 M794.3 81 L796.5 81 M777.4 73.1 L779 74.7 M791.6 87.3 L793.2 88.9 M777.4 88.9 L779 87.3 M791.6 74.7 L793.2 73.1"/></g>
<g opacity=".9"><rect x="688" y="56" width="1" height="2" fill="#58b8e8" transform="rotate(30 688 56)"/><rect x="752" y="66" width="1" height="2" fill="#f0a030" transform="rotate(-30 752 66)"/><rect x="762" y="70" width="1.2" height="2" fill="#58c878" transform="rotate(20 762 70)"/><rect x="757" y="77" width="1" height="1.6" fill="#e05858"/><rect x="694" y="67" width="1" height="1.6" fill="#e8c840"/><rect x="700" y="56" width="1" height="1.6" fill="#e05858" transform="rotate(40 700 56)"/><rect x="689" y="75" width="1" height="1.6" fill="#58b8e8"/></g>
</svg>
</div>
<svg class="a" style="left:657px;top:53.6px;width:5.6px;height:7.6px;" viewBox="0 0 6.6 9"><path d="M3.3 0.2 C5 0.2 5.8 1.6 5.8 3.2 C5.8 4 6.4 4.8 6.4 6 C6.4 6.6 6 6.6 5.7 6.2 C5.6 7 5.2 7.4 4.8 7.7 C5.4 7.9 5.6 8.6 4.6 8.7 L2 8.7 C1 8.6 1.2 7.9 1.8 7.7 C1.4 7.4 1 7 0.9 6.2 C0.6 6.6 0.2 6.6 0.2 6 C0.2 4.8 0.8 4 0.8 3.2 C0.8 1.6 1.6 0.2 3.3 0.2Z" fill="#fff" opacity=".85"/></svg>
<svg class="a" style="left:739.2px;top:54.7px;width:7px;height:6.9px;" viewBox="0 0 6.4 6.4"><rect width="6.4" height="6.4" rx="0.8" fill="#8890a6" opacity=".85"/><path d="M1.4 3.2 L2.8 4.6 L5 1.8" stroke="#fff" stroke-width="0.8" fill="none"/></svg>
<svg class="a" style="left:756.8px;top:54.8px;width:6.4px;height:6.4px;" viewBox="0 0 6 6"><path d="M3 0 L3 6 M0 3 L6 3" stroke="#d49a9a" stroke-width="0.8"/></svg>
<div class="a" style="left:774.2px;top:57.5px;width:5.8px;height:0.8px;background:#d49a9a;"></div>
<svg class="a" style="left:790px;top:55.4px;width:5.8px;height:5.8px;" viewBox="0 0 6 6"><path d="M0.3 0.3 L5.7 5.7 M5.7 0.3 L0.3 5.7" stroke="#64585a" stroke-width="0.85"/></svg>
<svg class="a" style="left:659px;top:70px;width:28px;height:28px;" viewBox="0 0 28 28">
<defs><clipPath id="avc"><circle cx="14" cy="14" r="13.6"/></clipPath></defs>
<circle cx="14" cy="14" r="14" fill="#f4dede"/>
<g clip-path="url(#avc)"><rect width="28" height="28" fill="#bca89c"/>
<path d="M0 0 L14 0 L10 28 L0 28Z" fill="#c8b6aa"/>
<path d="M11.6 10 C11.6 4.6 22.4 4.2 23.6 11 C24.6 16 24.6 22 23 28 L12 28 C10.6 22 10.8 15 11.6 10Z" fill="#2c2420"/>
<ellipse cx="16.4" cy="13.8" rx="3.6" ry="4.4" fill="#e6c6b0"/>
<path d="M9 21 C11 17.4 15 16.6 17 19 C18.4 21 17 24 15 28 L7 28Z" fill="#dcbca6"/>
<path d="M13 23 C16 21 21 21.4 23 24 L24 28 L12 28Z" fill="#d8cfc8"/>
</g></svg>
<svg class="a" style="left:679.3px;top:91.1px;width:7.4px;height:7.4px;" viewBox="0 0 7.4 7.4"><circle cx="3.7" cy="3.7" r="3.5" fill="#18c45c" stroke="#fdc1c1" stroke-width="0.5"/></svg>
<div class="t" style="top:73.30px;font-size:8.8px;color:#1a1010;left:693.4px;font-weight:bold;">Huhu</div>
<div class="a" style="left:718.2px;top:77.1px;width:12.8px;height:4.4px;background:#e6ae1c;border-radius:1px;"></div>
<div class="t" style="top:77.45px;font-size:3.7px;color:#6a4400;left:717.60px;width:14px;text-align:center;font-weight:bold;">LV00</div>
<div class="a" style="left:732.6px;top:77.1px;width:12px;height:4.4px;background:#bcbcc2;border-radius:1px;"></div>
<div class="t" style="top:77.45px;font-size:3.7px;color:#f6f6f8;left:731.60px;width:14px;text-align:center;font-weight:bold;">0310</div>
<div class="t" style="top:87.52px;font-size:6px;color:#2a1c1c;left:693.4px;letter-spacing:0.2px;">ʕ•Q•00?</div>
<svg class="a" style="left:658.4px;top:109.4px;width:7.4px;height:7.4px;" viewBox="0 0 7.4 7.4"><circle cx="3" cy="3" r="2.5" fill="none" stroke="#8a7474" stroke-width="0.7"/><path d="M4.9 4.9 L7 7" stroke="#8a7474" stroke-width="0.7"/></svg>
<div class="t" style="top:109.69px;font-size:6.4px;color:#8a7070;left:669.4px;">搜索</div>
<div class="t" style="top:128.08px;font-size:7.8px;color:#aaa2a2;left:668px;">消息</div>
<div class="t" style="top:128.08px;font-size:7.8px;color:#c9403c;left:714.4px;">联系人</div>
<div class="a" style="left:707px;top:140.8px;width:38.6px;height:1.3px;background:#e46a66;"></div>
<div class="t" style="top:128.19px;font-size:7.6px;color:#aaa2a2;left:764px;">空间</div>
<svg class="a" style="left:782.4px;top:130.6px;width:5.2px;height:3.4px;" viewBox="0 0 5.2 3.4"><path d="M0.4 0.4 L2.6 2.8 L4.8 0.4" stroke="#9a9494" stroke-width="0.7" fill="none"/></svg>
<div class="a" style="left:657px;top:146.6px;width:32px;height:12.8px;background:#fde0e0;border-radius:1.5px;"></div>
<div class="t" style="top:149.42px;font-size:7.2px;color:#e0382e;left:665.4px;">好友</div>
<div class="t" style="top:149.54px;font-size:7px;color:#8a8686;left:700.4px;">群聊</div>
<div class="a" style="left:778px;top:147.6px;width:0.5px;height:10px;background:#f2dede;"></div>
<svg class="a" style="left:786.6px;top:149.2px;width:6.6px;height:6.6px;" viewBox="0 0 6.6 6.6"><path d="M3.3 0 L3.3 6.6 M0 3.3 L6.6 3.3" stroke="#8a8a8a" stroke-width="0.7"/></svg>
<svg class="a" style="left:658.4px;top:169.4px;width:3.2px;height:4.8px;" viewBox="0 0 3.2 4.8"><path d="M0.5 0.4 L2.6 2.4 L0.5 4.4" stroke="#9a9090" stroke-width="0.6" fill="none"/></svg>
<div class="t" style="top:168.02px;font-size:7.2px;color:#352c2c;left:667px;">新朋友</div>
<svg class="a" style="left:658.4px;top:187.9px;width:3.2px;height:4.8px;" viewBox="0 0 3.2 4.8"><path d="M0.5 0.4 L2.6 2.4 L0.5 4.4" stroke="#9a9090" stroke-width="0.6" fill="none"/></svg>
<div class="t" style="top:186.52px;font-size:7.2px;color:#352c2c;left:667px;">我的设备 1/2</div>
<svg class="a" style="left:658.4px;top:206.4px;width:3.2px;height:4.8px;" viewBox="0 0 3.2 4.8"><path d="M0.5 0.4 L2.6 2.4 L0.5 4.4" stroke="#9a9090" stroke-width="0.6" fill="none"/></svg>
<div class="t" style="top:205.02px;font-size:7.2px;color:#352c2c;left:667px;">同朋友 1/1</div>
<svg class="a" style="left:658.4px;top:224.9px;width:3.2px;height:4.8px;" viewBox="0 0 3.2 4.8"><path d="M0.5 0.4 L2.6 2.4 L0.5 4.4" stroke="#9a9090" stroke-width="0.6" fill="none"/></svg>
<div class="t" style="top:223.52px;font-size:7.2px;color:#352c2c;left:667px;">男的人 36/79</div>
<svg class="a" style="left:658.4px;top:243.4px;width:3.2px;height:4.8px;" viewBox="0 0 3.2 4.8"><path d="M0.5 0.4 L2.6 2.4 L0.5 4.4" stroke="#9a9090" stroke-width="0.6" fill="none"/></svg>
<div class="t" style="top:242.02px;font-size:7.2px;color:#352c2c;left:667px;">女的人 31/66</div>
<svg class="a" style="left:658.4px;top:261.90000000000003px;width:3.2px;height:4.8px;" viewBox="0 0 3.2 4.8"><path d="M0.5 0.4 L2.6 2.4 L0.5 4.4" stroke="#9a9090" stroke-width="0.6" fill="none"/></svg>
<div class="t" style="top:260.52px;font-size:7.2px;color:#352c2c;left:667px;">公众号 6/6</div>
<div class="a" style="left:651px;top:329.4px;width:149px;height:0.6px;background:#ecdcdc;"></div>
<div class="a" style="left:660px;top:338.6px;width:10.4px;height:1.0px;background:#a8a0b0;"></div>
<div class="a" style="left:660px;top:342.5px;width:10.4px;height:1.0px;background:#a8a0b0;"></div>
<div class="a" style="left:660px;top:346.40000000000003px;width:10.4px;height:1.0px;background:#a8a0b0;"></div>
<svg class="a" style="left:679.4px;top:337.8px;width:12px;height:10.4px;" viewBox="0 0 12 10.4"><circle cx="4.6" cy="2.8" r="2.6" fill="#28a4f0"/><path d="M0.4 10 C0.4 6.8 2.2 5.6 4.6 5.6 C7 5.6 8.8 6.8 8.8 10Z" fill="#28a4f0"/><circle cx="9" cy="7.8" r="2.5" fill="#28a4f0" stroke="#fdeded" stroke-width="0.6"/><path d="M7.8 7.8 L10.2 7.8 M9 6.6 L9 9" stroke="#fff" stroke-width="0.6"/></svg>
<svg class="a" style="left:700.2px;top:337.8px;width:11px;height:10px;" viewBox="0 0 11 10"><path d="M2.2 0.4 L9 0.4 L10.6 2 L9.2 9.6 L0.6 9.6Z" fill="#2a8cf4"/><path d="M5.8 2 L7.6 4.2 L6.5 4.2 L6 8 L4.4 8 L4.9 4.2 L3.8 4.2Z" fill="#fff"/></svg>
<svg class="a" style="left:696px;top:28px;width:33px;height:36px;" viewBox="0 0 33 36">
<defs><linearGradient id="zg" x1="0.2" y1="0" x2="0.8" y2="1"><stop offset="0" stop-color="#2ea8f8"/><stop offset="1" stop-color="#0f6ee2"/></linearGradient></defs>
<path d="M3.8 0.1 L27.4 0.1 C29.6 0.1 31.1 1.6 31.1 3.8 L31.1 25.7 C31.1 27.9 29.6 29.4 27.4 29.4 L10.7 29.4 L5.8 35.2 L5 29.4 L3.8 29.4 C1.6 29.4 0 27.9 0 25.7 L0 3.8 C0 1.6 1.6 0.1 3.8 0.1Z" fill="url(#zg)"/>
<path d="M0 4.54 L25.33 4.54 L21.87 8.99 L14.67 8.99 L9.78 15.21 L16.44 15.21 L13.33 19.21 L1.07 19.21 L8.89 8.99 L0 8.99Z" fill="#fff"/>
<path d="M17.07 13.43 L19.56 10.32 L27.56 10.32 L17.78 22.77 L31.11 22.77 L31.11 26.77 L6.49 26.77Z" fill="#fff"/>
</svg>
<div class="t" style="left:731.4px;top:30.6px;font-size:15.8px;color:#0c0c10;letter-spacing:0.06em;font-weight:500;">知百科</div>
<div class="t" style="top:48.14px;font-size:8.2px;color:#16161e;left:731.8px;letter-spacing:1.43px;text-shadow:0 0 0.8px #fff,0 0 0.8px #fff;">ZHIBAIKE</div>
<div class="a" style="left:0px;top:430.6px;width:800px;height:19.4px;background:#1c2c40;"></div>
<div class="a" style="left:0px;top:430.6px;width:24.5px;height:19.4px;background:#1f3044;"></div>
<svg class="a" style="left:7.6px;top:438px;width:9.4px;height:8.4px;" viewBox="0 0 9.4 8.4"><path d="M0 1.2 L4.2 0.6 L4.2 4 L0 4Z M4.8 0.5 L9.4 0 L9.4 4 L4.8 4Z M0 4.5 L4.2 4.5 L4.2 7.8 L0 7.2Z M4.8 4.5 L9.4 4.5 L9.4 8.4 L4.8 7.9Z" fill="#fff"/></svg>
<div class="a" style="left:24.5px;top:431.2px;width:180.5px;height:18.8px;background:#f1f1f2;"></div>
<svg class="a" style="left:31.6px;top:437.6px;width:8.6px;height:8.6px;" viewBox="0 0 8.6 8.6"><circle cx="5.2" cy="3.4" r="2.8" fill="none" stroke="#222" stroke-width="0.9"/><path d="M3.2 5.4 L0.5 8.1" stroke="#222" stroke-width="1"/></svg>
<div class="t" style="top:437.76px;font-size:8px;color:#3a3a3a;left:46px;">在此键入进行搜索</div>
<svg class="a" style="left:213.4px;top:436.8px;width:8.4px;height:8.4px;" viewBox="0 0 8.4 8.4"><circle cx="4.2" cy="4.2" r="3.3" fill="none" stroke="#fff" stroke-width="1.1"/></svg>
<svg class="a" style="left:238px;top:437px;width:10.4px;height:8.6px;" viewBox="0 0 10.4 8.6"><rect x="2.6" y="0.6" width="5.2" height="7.4" fill="none" stroke="#fff" stroke-width="0.9"/><path d="M0.5 1.6 L0.5 7 M9.9 1.6 L9.9 7" stroke="#fff" stroke-width="0.9"/><rect x="3.8" y="3.4" width="2.8" height="1.8" fill="#fff"/></svg>
<svg class="a" style="left:263.6px;top:435px;width:12.6px;height:12.6px;" viewBox="0 0 17.6 16.6">
<circle cx="9" cy="8.2" r="7.8" fill="#2a9ee4"/>
<path d="M2 6 C3.6 1.8 8 -0.4 12.4 1.2 C15.4 2.4 17 5 16.8 8 C16.6 10.4 14.6 11.4 12.6 11 C11 10.6 10.4 9.4 11 8.2 C11.4 7.2 10.6 5.6 8.6 5.4 C6 5.2 3.4 6.4 2 9.6Z" fill="#4fd07a"/>
<path d="M1.4 9.4 C2.6 6.4 5.6 5 8.4 5.4 C6.6 6.2 5.8 8 6.4 10.2 C7.2 13 9.8 14.6 13.2 14 C11 16.2 7.4 16.6 4.6 15 C2.4 13.8 1.2 11.6 1.4 9.4Z" fill="#1862c8"/>
<ellipse cx="11.2" cy="8.4" rx="2.2" ry="2.4" fill="#1c2c40"/></svg>
<svg class="a" style="left:289.4px;top:436px;width:12px;height:10.6px;" viewBox="0 0 12 10.6"><path d="M0.4 1 L4.4 1 L5.4 2.2 L11.6 2.2 L11.6 10 L0.4 10Z" fill="#f4b63a"/><path d="M0.4 3.8 L11.6 3.8 L11.6 10 L0.4 10Z" fill="#fbd56a"/><rect x="2.2" y="6.4" width="7.6" height="3.6" fill="#3a9ae8"/><rect x="3.6" y="7.6" width="4.8" height="2.4" fill="#fbd56a"/></svg>
<svg class="a" style="left:316px;top:437px;width:11px;height:9.6px;" viewBox="0 0 17.5 15.5"><path d="M1 1 L7 1 L8.4 9 L6.2 13.2 L3.6 13.2Z" fill="#f0392b"/><path d="M7.6 1 L12 1 L10.4 8.6 L8.8 5.2Z" fill="#f7671f"/><path d="M12.6 1 L17 1 L14.6 13.2 L10 13.2 L9.6 11Z" fill="#ea2a24"/></svg>
<div class="a" style="left:335.5px;top:430.6px;width:24.5px;height:19.4px;background:#36475a;"></div>
<div class="a" style="left:335.5px;top:449px;width:24.5px;height:1px;background:#8cc0f0;"></div>
<svg class="a" style="left:342.4px;top:436.4px;width:10.4px;height:11.4px;" viewBox="0 0 17 16"><ellipse cx="9" cy="5.6" rx="3.5" ry="3.8" fill="#111"/><ellipse cx="9" cy="10.6" rx="4.6" ry="4.2" fill="#111"/><ellipse cx="9" cy="11.2" rx="3" ry="3.2" fill="#fff"/><ellipse cx="7.9" cy="4.8" rx="0.8" ry="1.1" fill="#fff"/><ellipse cx="10.1" cy="4.8" rx="0.8" ry="1.1" fill="#fff"/><path d="M5.2 8 C7 9.4 11 9.4 12.8 8 L13 9.6 C11 10.8 7 10.8 5 9.6Z" fill="#e8262a"/><ellipse cx="6.6" cy="14.8" rx="2" ry="0.9" fill="#f7a81c"/><ellipse cx="11.4" cy="14.8" rx="2" ry="0.9" fill="#f7a81c"/></svg>
<div class="a" style="left:368.6px;top:443.2px;width:7.6px;height:1.6px;background:#e8ecf0;border-radius:1px;"></div>
<div class="a" style="left:369.6px;top:445.6px;width:5.6px;height:1px;background:#0c1018;"></div>
<svg class="a" style="left:619px;top:437.6px;width:13px;height:8.8px;" viewBox="0 0 13 8.8"><rect x="0.5" y="0.5" width="12" height="7.8" fill="none" stroke="#fff" stroke-width="0.9"/><rect x="2" y="2" width="4" height="1.2" fill="#fff"/><rect x="2" y="4" width="2.4" height="2.6" fill="#fff"/><rect x="5.4" y="4" width="2.4" height="2.6" fill="#fff"/><rect x="8.6" y="2" width="2.6" height="4.6" fill="#fff"/></svg>
<svg class="a" style="left:640.4px;top:439.4px;width:6.6px;height:3.8px;" viewBox="0 0 6.6 3.8"><path d="M0.4 3.4 L3.3 0.5 L6.2 3.4" stroke="#fff" stroke-width="0.8" fill="none"/></svg>
<svg class="a" style="left:652px;top:437.6px;width:8.8px;height:8.8px;" viewBox="0 0 8.8 8.8"><circle cx="4.4" cy="4.4" r="4.1" fill="#f06a6a"/><circle cx="4.4" cy="4.4" r="2.2" fill="#fde4e4"/><path d="M4.4 0.3 L5.4 2 L3.4 2Z M4.4 8.5 L5.4 6.8 L3.4 6.8Z M0.3 4.4 L2 3.4 L2 5.4Z M8.5 4.4 L6.8 3.4 L6.8 5.4Z" fill="#e83a3a"/></svg>
<svg class="a" style="left:665px;top:438.2px;width:9px;height:7.8px;" viewBox="0 0 17.5 15.5"><path d="M1 1 L7 1 L8.4 9 L6.2 13.2 L3.6 13.2Z" fill="#f0392b"/><path d="M7.6 1 L12 1 L10.4 8.6 L8.8 5.2Z" fill="#f7671f"/><path d="M12.6 1 L17 1 L14.6 13.2 L10 13.2 L9.6 11Z" fill="#ea2a24"/></svg>
<svg class="a" style="left:678px;top:436.6px;width:7.6px;height:10.4px;" viewBox="0 0 7.6 10.4"><ellipse cx="3.8" cy="3" rx="2.2" ry="2.4" fill="#111"/><ellipse cx="3.8" cy="6.8" rx="3" ry="3" fill="#e84a8a"/><ellipse cx="3.8" cy="7.2" rx="1.8" ry="2" fill="#fff"/><path d="M2 0.8 L3.8 -0.2 L5.6 0.8 L5 2 L2.6 2Z" fill="#e84a8a"/><ellipse cx="2.4" cy="9.8" rx="1.3" ry="0.6" fill="#f7a81c"/><ellipse cx="5.2" cy="9.8" rx="1.3" ry="0.6" fill="#f7a81c"/></svg>
<svg class="a" style="left:689.6px;top:438.8px;width:8.6px;height:6px;" viewBox="0 0 8.6 6"><rect x="1.6" y="1" width="7" height="4.4" fill="#fff"/><rect x="0" y="0.2" width="2.4" height="2.2" fill="#fff"/></svg>
<svg class="a" style="left:703px;top:438px;width:7.4px;height:7.6px;" viewBox="0 0 7.4 7.6"><path d="M0.4 7.2 L7 7.2 L7 0.6Z" fill="none" stroke="#8a96a4" stroke-width="0.5"/><path d="M1 7 C1 4 3.4 1.6 6.6 1.6 M2.8 7 C2.8 5 4.4 3.4 6.6 3.4 M4.6 7 C4.6 5.8 5.4 5.2 6.6 5.2" stroke="#fff" stroke-width="0.8" fill="none"/></svg>
<svg class="a" style="left:715px;top:438px;width:8.4px;height:7.4px;" viewBox="0 0 8.4 7.4"><path d="M0.4 2.6 L2 2.6 L4 0.8 L4 6.6 L2 4.8 L0.4 4.8Z" fill="none" stroke="#fff" stroke-width="0.7"/><path d="M5.2 2.4 C5.9 3.2 5.9 4.2 5.2 5 M6.4 1.4 C7.7 2.8 7.7 4.6 6.4 6" stroke="#fff" stroke-width="0.6" fill="none"/></svg>
<div class="t" style="top:437.99px;font-size:7.6px;color:#fff;left:727.4px;">中</div>
<div class="t" style="top:434.80px;font-size:6.2px;color:#fff;left:736.00px;width:40px;text-align:center;">14:43</div>
<div class="t" style="top:443.60px;font-size:6.2px;color:#fff;left:731.60px;width:50px;text-align:center;">2021/11/25</div>
<svg class="a" style="left:782px;top:437px;width:10.6px;height:10.4px;" viewBox="0 0 10.6 10.4"><path d="M0.5 0.5 L8.6 0.5 L8.6 6.8 L3.4 6.8 L1.8 8.6 L1.8 6.8 L0.5 6.8Z" fill="#fff"/><path d="M2 2.4 L7 2.4 M2 4.4 L7 4.4" stroke="#1c2c40" stroke-width="0.8"/><circle cx="8.2" cy="8" r="2.3" fill="#1c2c40" stroke="#fff" stroke-width="0.5"/><rect x="7.9" y="6.7" width="0.7" height="2.6" fill="#fff"/></svg>
<div class="t sub" style="left:317.4px;top:420.4px;font-size:21px;color:#fff;">点击删除好友键</div>
</div></div>
</body></html>
